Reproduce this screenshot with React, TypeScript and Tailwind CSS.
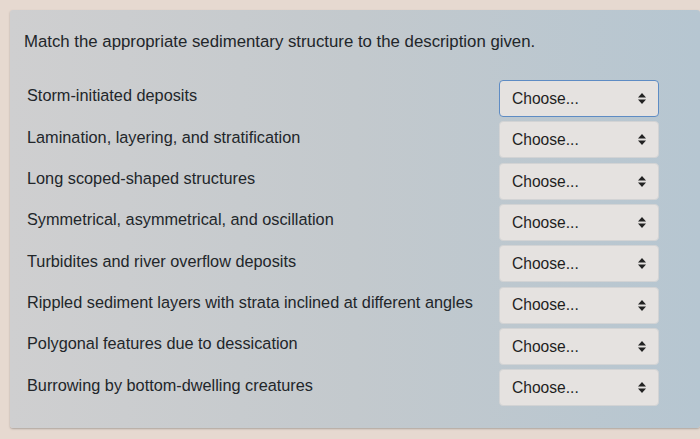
import React from "react";

const rows = [
  "Storm-initiated deposits",
  "Lamination, layering, and stratification",
  "Long scoped-shaped structures",
  "Symmetrical, asymmetrical, and oscillation",
  "Turbidites and river overflow deposits",
  "Rippled sediment layers with strata inclined at different angles",
  "Polygonal features due to dessication",
  "Burrowing by bottom-dwelling creatures",
];

function Arrows() {
  return (
    <svg width="8" height="11" viewBox="0 0 8 11" className="shrink-0">
      <path d="M4 0 L8 4.5 L0 4.5 Z" fill="#222" />
      <path d="M0 6.5 L8 6.5 L4 11 Z" fill="#222" />
    </svg>
  );
}

export default function App() {
  return (
    <div
      className="w-[700px] h-[439px] bg-[#e6d9d0] pt-[10px] pl-[10px] overflow-hidden"
      style={{ fontFamily: '"Liberation Sans", Arial, sans-serif' }}
    >
      <div className="h-[418px] rounded-[3px] bg-gradient-to-r from-[#cfcfd0] via-[#c3c9cd] to-[#b6c6d1] shadow-[0_1px_2px_rgba(0,0,0,0.25)] pl-[14px] pt-[21px] text-[#22262a]">
        <div className="text-[16.8px] leading-[22px]">
          Match the appropriate sedimentary structure to the description given.
        </div>
        <div className="mt-[25px] flex flex-col">
          {rows.map((r, i) => (
            <div key={i} className="flex items-center h-[41.3px]">
              <div className="w-[475px] pl-[3px] text-[16.3px] -mt-[6px]">{r}</div>
              <div
                className={
                  "w-[160px] h-[37px] rounded-[4px] bg-[#e5e2e0] flex items-center justify-between pl-[12px] pr-[12px] text-[15.6px] text-[#1e1e1e] " +
                  (i === 0
                    ? "border border-[#5e8cc4]"
                    : "border border-[#d2d3d4]")
                }
              >
                <span>Choose...</span>
                <Arrows />
              </div>
            </div>
          ))}
        </div>
      </div>
    </div>
  );
}
